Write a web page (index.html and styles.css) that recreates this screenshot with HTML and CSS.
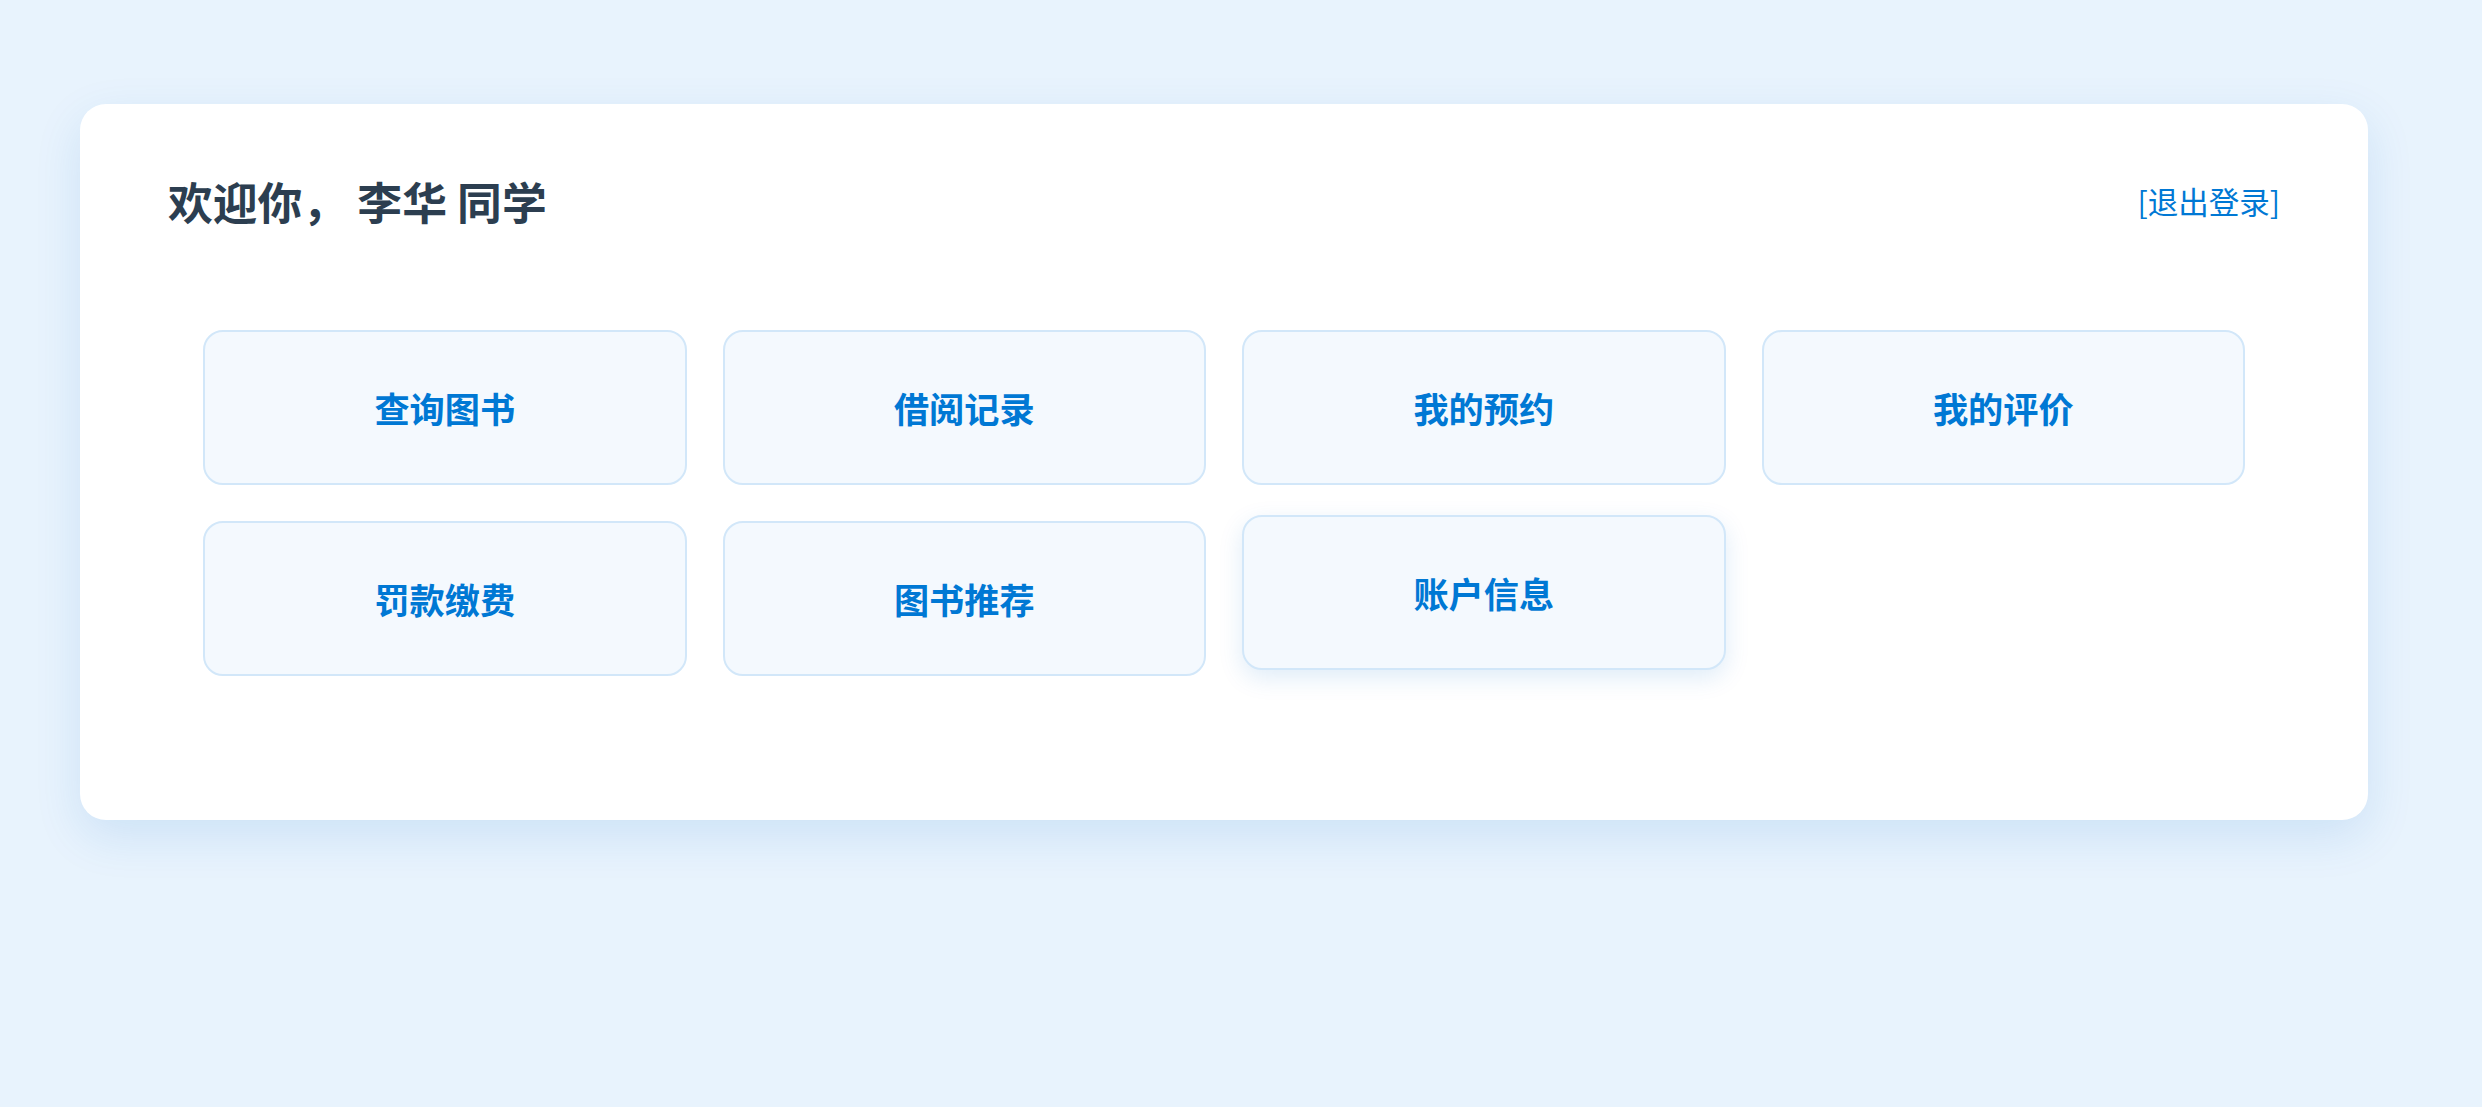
FILE: index.html
```html
<!DOCTYPE html>
<html lang="zh-CN">
<head>
<meta charset="utf-8">
<title>学生主页</title>
<link rel="stylesheet" href="styles.css">
</head>
<body>
<div class="page">
  <div class="card">
    <div class="header">
      <h2 class="welcome">欢迎你， 李华 同学</h2>
      <a class="logout" href="#">[退出登录]</a>
    </div>
    <div class="menu">
      <div class="item">查询图书</div>
      <div class="item">借阅记录</div>
      <div class="item">我的预约</div>
      <div class="item">我的评价</div>
      <div class="item">罚款缴费</div>
      <div class="item">图书推荐</div>
      <div class="item item-hover">账户信息</div>
    </div>
  </div>
</div>
</body>
</html>
```

FILE: styles.css
```css
html, body {
  margin: 0;
  padding: 0;
}
body {
  background: #e8f3fd;
  font-family: "Noto Sans CJK SC", "Noto Sans", sans-serif;
  min-height: 1107px;
}
.page {
  padding: 104px 0 0 80px;
}
.card {
  width: 2288px;
  box-sizing: border-box;
  background: #ffffff;
  border-radius: 26px;
  padding: 71px 88px 144px;
  box-shadow: 0 16px 48px rgba(0, 110, 200, 0.12);
}
.header {
  display: flex;
  justify-content: space-between;
  align-items: center;
  height: 52px;
}
.welcome {
  margin: 0;
  font-size: 44.8px;
  line-height: 52px;
  font-weight: 700;
  color: #2c3e50;
}
.logout {
  font-size: 30.5px;
  line-height: 40px;
  color: #0078d4;
  text-decoration: none;
}
.menu {
  margin-top: 103px;
  padding: 0 35px;
  display: grid;
  grid-template-columns: repeat(4, 1fr);
  gap: 36px;
}
.item {
  height: 155px;
  box-sizing: border-box;
  display: flex;
  align-items: center;
  justify-content: center;
  background: #f4f9fe;
  border: 2px solid #d2e7f9;
  border-radius: 20px;
  color: #0078d4;
  font-size: 35.2px;
  font-weight: 700;
}
.item-hover {
  transform: translateY(-6px);
  box-shadow: 0 8px 24px rgba(0, 110, 200, 0.13);
}
```
